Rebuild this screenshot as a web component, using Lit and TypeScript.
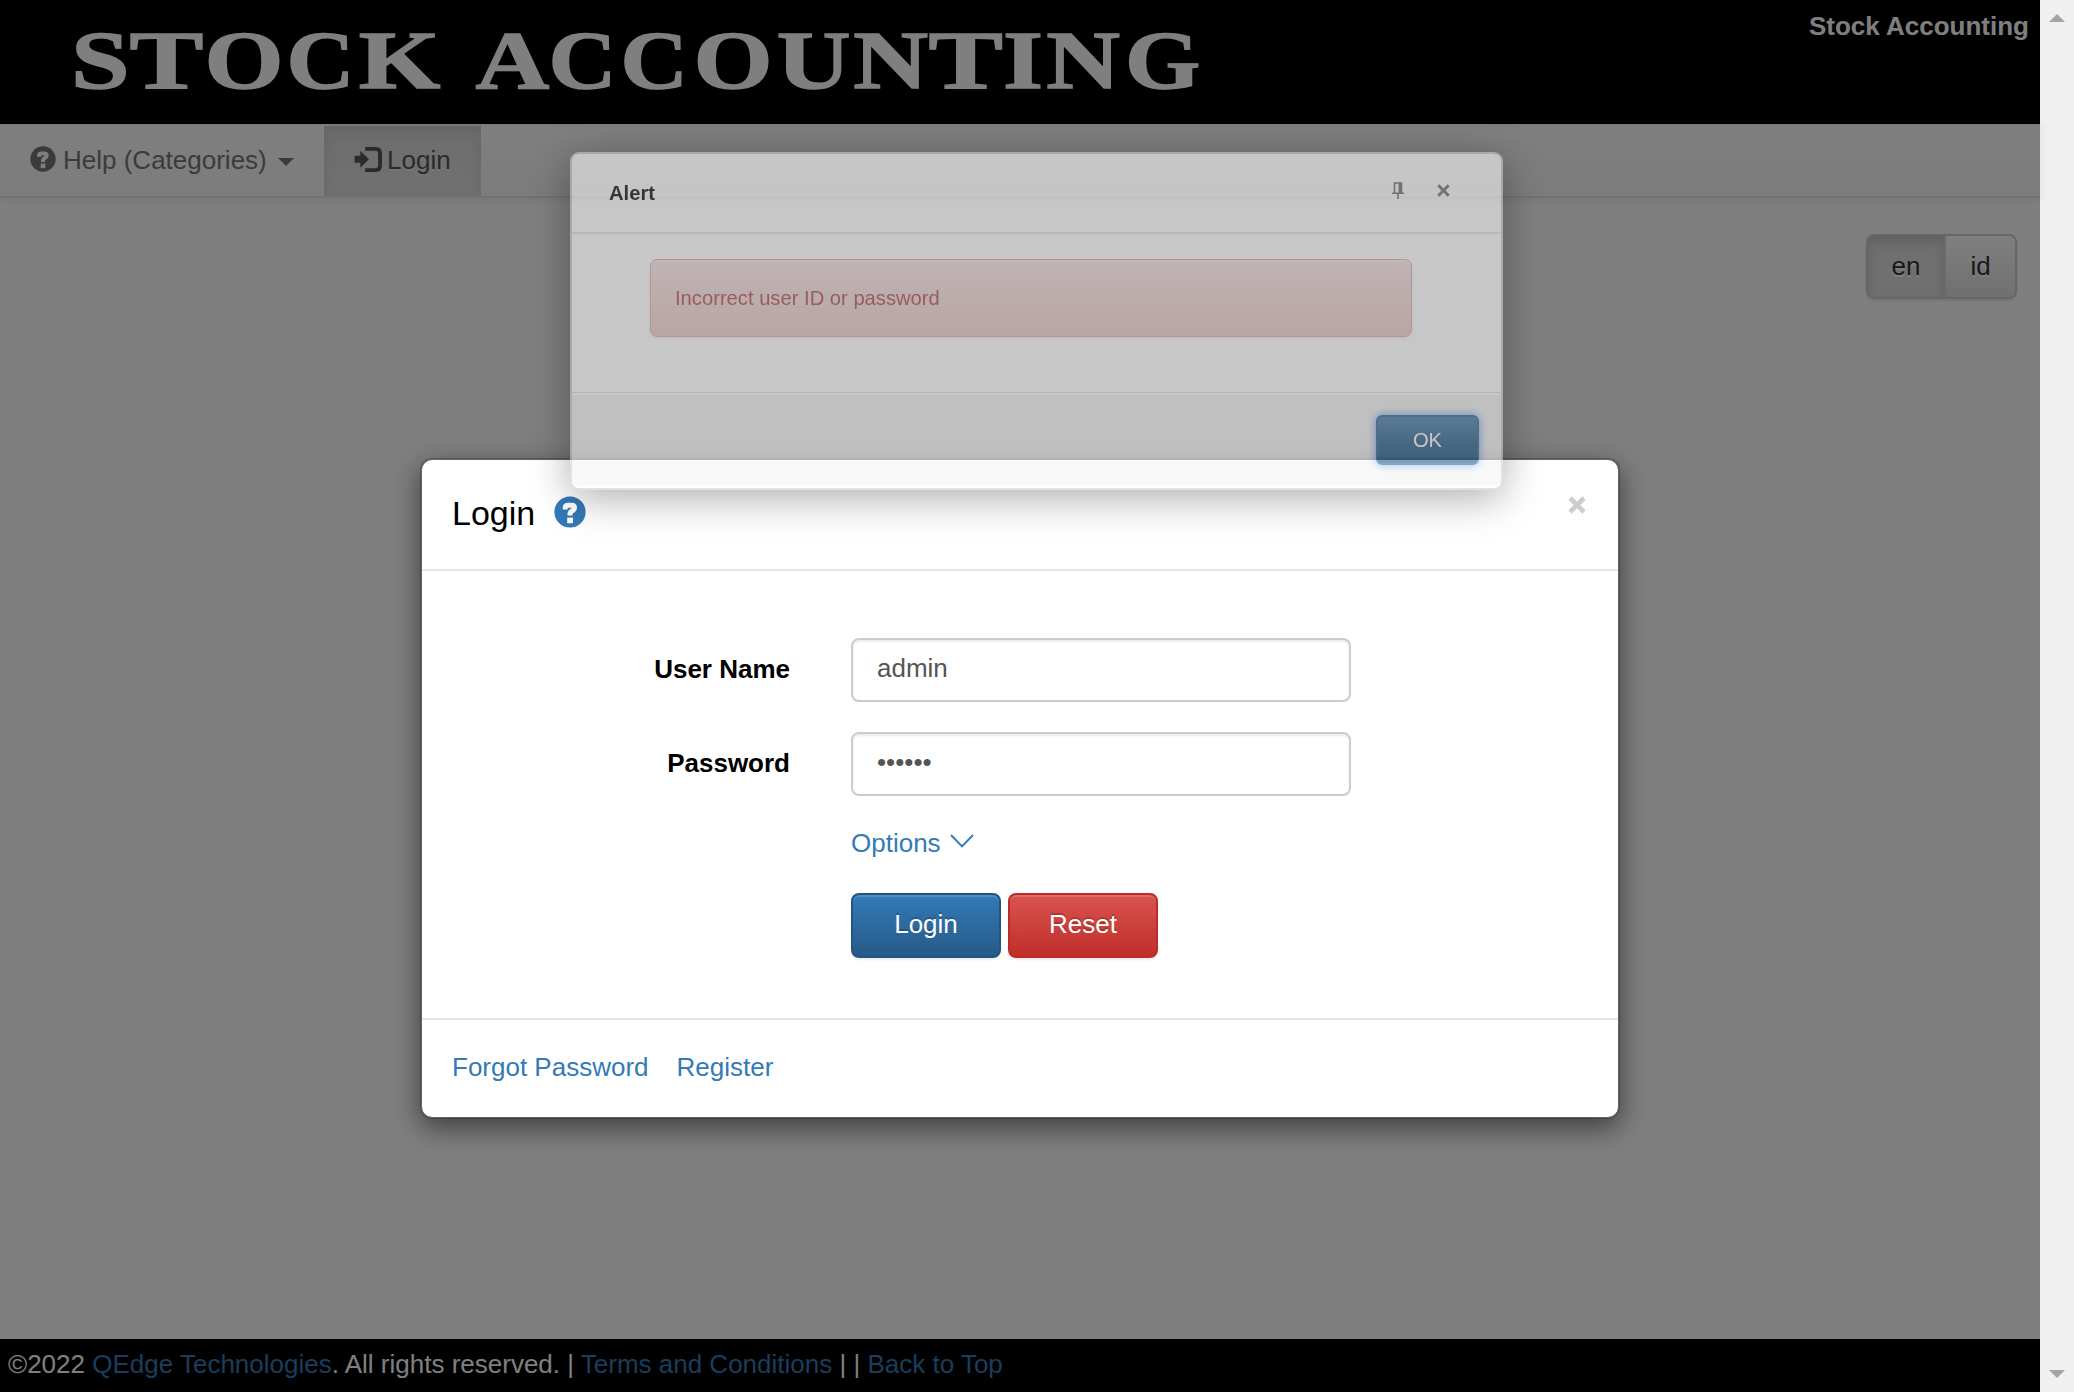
import { LitElement, html, svg, css } from "lit";
import { customElement } from "lit/decorators.js";

/* Ink extents of each banner capital, in em: [start, end]. */
const INK: Record<string, [number, number]> = {
  A: [0.009, 0.689], C: [0.049, 0.687], G: [0.037, 0.755], I: [0.02, 0.37], K: [0.03, 0.769],
  N: [0.016, 0.701], O: [0.035, 0.743], S: [0.048, 0.513], T: [0.031, 0.636], U: [0.016, 0.701],
};
/* Banner letters with the left and right edges they are stretched between. */
const BANNER: Array<[string, number, number]> = [
  ["S", 76, 125], ["T", 133, 200], ["O", 208, 280], ["C", 291, 351], ["K", 362, 439.5],
  ["A", 476.5, 546], ["C", 553, 613], ["C", 625, 684.5], ["O", 697, 769], ["U", 778.5, 848.5],
  ["N", 855, 926], ["T", 932, 999.5], ["I", 1005, 1041], ["N", 1048, 1118], ["G", 1128.5, 1198],
];
const SIZE = 83;

const letter = ([c, left, right]: [string, number, number]) => {
  const [a, b] = INK[c];
  const k = (right - left) / ((b - a) * SIZE);
  return svg`<text transform="translate(${left - a * SIZE * k} 88) scale(${k} 1)">${c}</text>`;
};

const questionSign = (cls: string) => html`
  <svg class=${cls} viewBox="0 0 32 32" aria-hidden="true">
    <mask id="q">
      <rect width="32" height="32" fill="#fff"></rect>
      <path d="M11.2 13.4V11.8Q11.2 9.3 14.2 9.3H17.6Q20.5 9.3 20.5 11.6Q20.5 13.6 18.3 14.8Q16 16 16 18.6V19.6"
        fill="none" stroke="#000" stroke-width="5"></path>
      <rect x="13.2" y="21.6" width="5.8" height="5.6" fill="#000"></rect>
    </mask>
    <circle cx="16" cy="16" r="15.6" fill="currentColor" mask="url(#q)"></circle>
  </svg>`;

@customElement("app-root")
export class AppRoot extends LitElement {
  static styles = css`
    :host { display: block; width: 100vw; height: 100vh; overflow: hidden;
      font: 26px/37.5px "Liberation Sans", Arial, sans-serif; color: #000; }
    * { box-sizing: border-box; }
    a { color: #337ab7; text-decoration: none; }
    .window { display: flex; height: 100%; background: #fff; }
    .viewport { position: relative; flex: 1; display: flex; flex-direction: column; }
    .scrollbar { width: 34px; background: #f0f0f0; display: flex; flex-direction: column;
      justify-content: space-between; align-items: center; padding: 14px 0 14px; }
    .scrollbar svg { width: 16px; height: 8px; display: block; fill: #a3a3a3; }

    .banner { height: 124px; background: #000; display: flex; justify-content: space-between; }
    .logo { width: 1240px; height: 124px; display: block; }
    .logo text { font-family: "Liberation Serif", serif; font-weight: bold; font-size: 83px; fill: #fff;
      stroke: #fff; stroke-width: 1.4px; }
    .site { margin: 0; padding: 8px 11px 0 0; color: #fff; font-weight: bold; }

    .nav { height: 74px; display: flex; border-top: 2px solid #f6f6f6; border-bottom: 2px solid #e4e4e4;
      background: linear-gradient(#fff, #f8f8f8); box-shadow: 0 2px 9px rgba(0,0,0,.075);
      color: #777; text-shadow: 0 2px 0 rgba(255,255,255,.25); }
    .item { display: flex; align-items: center; width: 324px; padding: 0 0 0 30px; }
    .item .q { width: 26px; height: 26px; margin: -5px 7px 0 0; }
    .caret { border: 8px solid transparent; border-top-color: currentColor; border-bottom: 0; margin: 2px 0 0 11px; }
    .item.active { color: #555; width: 157px;
      background: linear-gradient(#dbdbdb, #e2e2e2); box-shadow: inset 0 6px 17px rgba(0,0,0,.075); }
    .signin { width: 29px; height: 25px; margin: -4px 4px 0 0; }

    .content { flex: 1; padding: 36px 23px 0; display: flex; justify-content: flex-end; align-items: flex-start; }
    .langs { display: flex; height: 65px; border: 2px solid #ccc; border-radius: 8px; overflow: hidden;
      box-shadow: 0 2px 3px rgba(0,0,0,.1); color: #333; text-shadow: 0 2px 0 #fff; }
    .lang { display: flex; align-items: center; justify-content: center; width: 69px;
      background: linear-gradient(#fff, #e0e0e0); }
    .lang.on { width: 78px; border-right: 2px solid #d4d4d4; background: #e0e0e0;
      box-shadow: inset 0 6px 12px rgba(0,0,0,.14); }
    .footer { height: 53px; background: #000; color: #fff; padding: 7px 8px 0; white-space: pre; }

    .backdrop { position: absolute; inset: 0; background: rgba(0,0,0,.5); }
    .modal { position: absolute; left: 420px; top: 458px; width: 1200px; height: 661px; display: flex; flex-direction: column;
      border: 2px solid rgba(0,0,0,.2); border-radius: 12px; background: #fff; background-clip: padding-box;
      box-shadow: 0 9px 28px rgba(0,0,0,.5); }
    .mhead { height: 111px; border-bottom: 2px solid #e5e5e5; padding: 0 32px 0 30px; display: flex; align-items: flex-start; }
    .title { margin: 29px 0 0; font-size: 34px; line-height: 48px; font-weight: normal; }
    .mhead .q { width: 32px; height: 32px; color: #337ab7; margin: 36px 0 0 19px; }
    .close { width: 18px; height: 18px; margin: 36px 0 0 auto; }
    .form { flex: 1; padding: 67px 30px 0; display: grid; grid-template-columns: 338px 500px; column-gap: 61px; align-content: start; }
    .label { font-weight: bold; text-align: right; height: 64px; line-height: 62px; margin-bottom: 30px; }
    .input { font: inherit; color: #555; width: 500px; height: 64px; padding: 0 24px 3px; margin-bottom: 30px;
      border: 2px solid #ccc; border-radius: 8px; background: #fff; outline: 0; box-shadow: inset 0 2px 2px rgba(0,0,0,.075); }
    .options { grid-column: 2; height: 37px; display: flex; align-items: center; margin: -1px 0 31px; }
    .options svg { width: 24px; height: 14px; margin: -6px 0 0 9px; }
    .actions { grid-column: 2; display: flex; gap: 7px; }
    .btn { font: inherit; color: #fff; width: 150px; height: 65px; padding: 0 0 1px; border-radius: 8px;
      text-shadow: 0 -2px 0 rgba(0,0,0,.2); box-shadow: inset 0 2px 0 rgba(255,255,255,.15), 0 2px 2px rgba(0,0,0,.075); }
    .primary { border: 2px solid #245580; background: linear-gradient(#337ab7, #265a88); }
    .danger { border: 2px solid #b92c28; background: linear-gradient(#d9534f, #c12e2a); }
    .mfoot { height: 99px; border-top: 2px solid #e5e5e5; padding: 29px 30px 0; display: flex; gap: 28px; }

    .alert { position: absolute; left: 570px; top: 152px; width: 933px; height: 338px; display: flex; flex-direction: column;
      opacity: .56; border: 2px solid #ccc; border-radius: 9px; background: #fff;
      box-shadow: 0 8px 42px rgba(0,0,0,.58); font-size: 20.2px; line-height: 30px; color: #000; }
    .ahead { height: 80px; border-bottom: 2px solid #e5e5e5; padding: 0 51px 0 37px; display: flex; align-items: center; }
    .atitle { margin: 0; font-size: 20.2px; font-weight: bold; flex: 1; }
    .pin { width: 12px; height: 17px; margin: -6px 33px 0 0; color: #6b6b6b; }
    .ahead .x { width: 13px; height: 13px; margin-top: -6px; color: #6b6b6b; }
    .abody { flex: 1; padding: 25px 89px 0 78px; }
    .msg { height: 78px; padding: 23px 24px; border: 1px solid #dca7a7; border-radius: 7px; color: #a94442;
      background: linear-gradient(#f2dede, #e7c3c3); box-shadow: inset 0 2px 0 rgba(255,255,255,.25), 0 2px 3px rgba(0,0,0,.05); }
    .afoot { height: 96px; border-top: 1px solid #ddd; background: #f4f4f4; box-shadow: inset 0 2px 0 #fff;
      border-radius: 0 0 8px 8px; border-bottom: 2px solid #fff; padding: 22px 22px 0; display: flex; justify-content: flex-end; align-items: flex-start; }
    .ok { font: 20.2px/30px "Liberation Sans", Arial, sans-serif; color: #fff; width: 103px; height: 50px; padding: 0;
      border: 2px solid #2a628f; border-radius: 6px; background: linear-gradient(#4077a5, #1d5585 60%, #1b5583);
      box-shadow: 0 0 8px #4d8df0; }
  `;

  render() {
    return html`
      <div class="window">
        <div class="viewport">
          <header class="banner">
            <svg class="logo" viewBox="0 0 1240 124" role="img" aria-label="Stock Accounting">${BANNER.map(letter)}</svg>
            <p class="site">Stock Accounting</p>
          </header>
          <nav class="nav">
            <div class="item">${questionSign("q")}<span>Help (Categories)</span><i class="caret"></i></div>
            <div class="item active">
              <svg class="signin" viewBox="0 0 29 26" aria-hidden="true">
                <path d="M0 9H6V4L15 12.7L6 21.5V16.5H0Z" fill="currentColor"></path>
                <path d="M11 2H22Q26.5 2 26.5 6.5V19.5Q26.5 24 22 24H11" fill="none" stroke="currentColor" stroke-width="4"></path>
              </svg><span>Login</span>
            </div>
          </nav>
          <main class="content">
            <div class="langs"><span class="lang on">en</span><span class="lang">id</span></div>
          </main>
          <footer class="footer">©2022 <a>QEdge Technologies</a>. All rights reserved. | <a>Terms and Conditions</a> | | <a>Back to Top</a></footer>

          <div class="backdrop"></div>

          <section class="modal">
            <div class="mhead">
              <h4 class="title">Login</h4>${questionSign("q")}
              <svg class="close" viewBox="0 0 18 18"><path d="M2 2L16 16M16 2L2 16" stroke="#ccc" stroke-width="4.6"></path></svg>
            </div>
            <div class="form">
              <label class="label">User Name</label><input class="input" type="text" value="admin">
              <label class="label">Password</label><input class="input" type="password" value="secret">
              <a class="options">Options
                <svg viewBox="0 0 24 14"><path d="M1 1L12 12.4L23 1" fill="none" stroke="currentColor" stroke-width="1.9"></path></svg>
              </a>
              <div class="actions"><button class="btn primary">Login</button><button class="btn danger">Reset</button></div>
            </div>
            <div class="mfoot"><a>Forgot Password</a><a>Register</a></div>
          </section>

          <section class="alert">
            <div class="ahead">
              <h5 class="atitle">Alert</h5>
              <svg class="pin" viewBox="0 0 12 17"><path d="M2.5 11V1H9.5V11M0 11.2H12M6 11V17" fill="none" stroke="currentColor" stroke-width="1.6"></path><path d="M6.5 1H9.5V11H6.5Z" fill="currentColor"></path></svg>
              <svg class="x" viewBox="0 0 13 13"><path d="M1.3 1.3L11.7 11.7M11.7 1.3L1.3 11.7" stroke="currentColor" stroke-width="3"></path></svg>
            </div>
            <div class="abody"><div class="msg">Incorrect user ID or password</div></div>
            <div class="afoot"><button class="ok">OK</button></div>
          </section>
        </div>
        <aside class="scrollbar">
          <svg viewBox="0 0 16 8"><path d="M0 8L8 0L16 8Z"></path></svg>
          <svg viewBox="0 0 16 8"><path d="M0 0L8 8L16 0Z"></path></svg>
        </aside>
      </div>`;
  }
}
